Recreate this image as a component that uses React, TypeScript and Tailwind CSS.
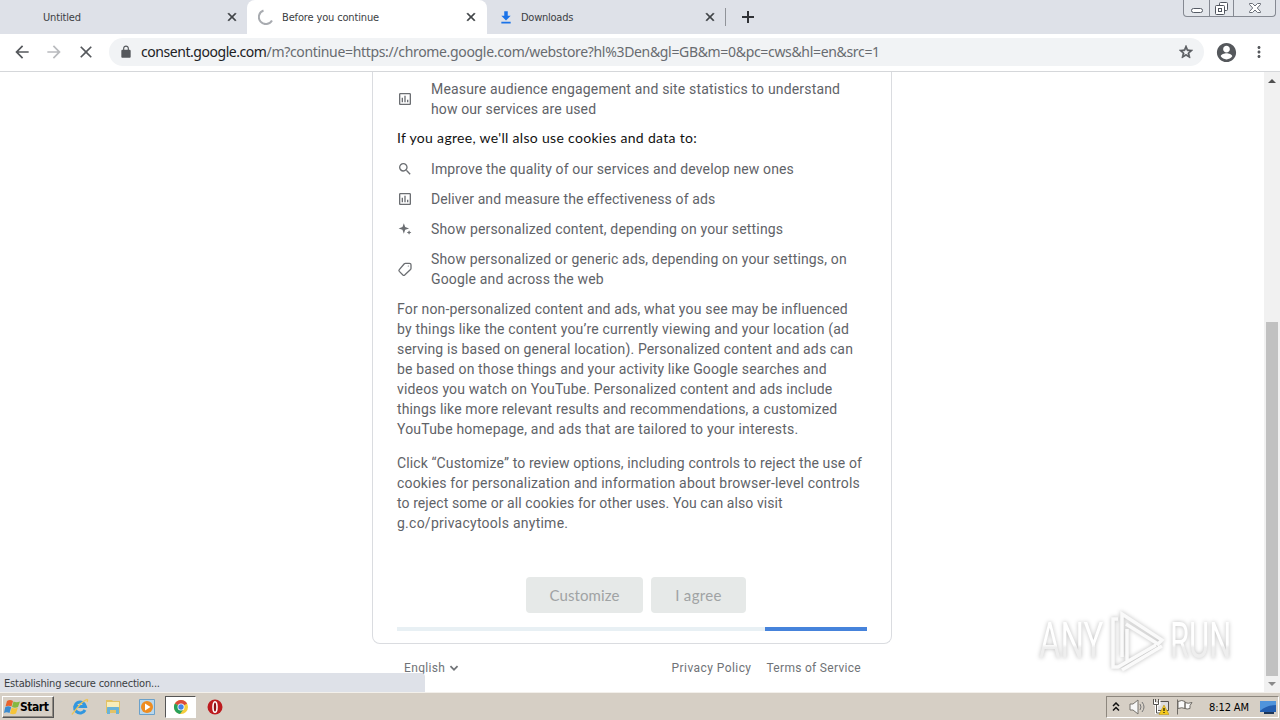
import type { ReactNode } from "react";

const ui = "font-['DejaVu_Sans_Condensed','DejaVu_Sans',sans-serif] [font-stretch:condensed]";

interface IconProps {
    d: string;
    className?: string;
}

function Icon({ d, className = "size-4" }: IconProps) {
    return (
        <svg viewBox="0 0 24 24" fill="currentColor" className={`shrink-0 ${className}`}>
            <path d={d} />
        </svg>
    );
}

const icons = {
    close: "M19 6.41 17.59 5 12 10.59 6.41 5 5 6.41 10.59 12 5 17.59 6.41 19 12 13.41 17.59 19 19 17.59 13.41 12z",
    back: "M20 11H7.83l5.59-5.59L12 4l-8 8 8 8 1.41-1.41L7.83 13H20v-2z",
    forward: "M12 4l-1.41 1.41L16.17 11H4v2h12.17l-5.58 5.59L12 20l8-8z",
    lock: "M18 8h-1V6c0-2.76-2.24-5-5-5S7 3.24 7 6v2H6c-1.1 0-2 .9-2 2v10c0 1.1.9 2 2 2h12c1.1 0 2-.9 2-2V10c0-1.1-.9-2-2-2zM9 8V6c0-1.66 1.34-3 3-3s3 1.34 3 3v2z",
    star: "M22 9.24l-7.19-.62L12 2 9.19 8.63 2 9.24l5.46 4.73L5.82 21 12 17.27 18.18 21l-1.63-7.03L22 9.24zM12 15.4l-3.76 2.27 1-4.28-3.32-2.88 4.38-.38L12 6.1l1.71 4.04 4.38.38-3.32 2.88 1 4.28L12 15.4z",
    account: "M12 2C6.48 2 2 6.48 2 12s4.48 10 10 10 10-4.48 10-10S17.52 2 12 2zm0 3c1.93 0 3.5 1.57 3.5 3.5S13.93 12 12 12s-3.5-1.57-3.5-3.5S10.07 5 12 5zm0 14.2c-2.5 0-4.71-1.28-6-3.22.03-1.99 4-3.08 6-3.08s5.97 1.09 6 3.08c-1.29 1.94-3.5 3.22-6 3.22z",
    dots: "M12 8c1.1 0 2-.9 2-2s-.9-2-2-2-2 .9-2 2 .9 2 2 2zm0 2c-1.1 0-2 .9-2 2s.9 2 2 2 2-.9 2-2-.9-2-2-2zm0 6c-1.1 0-2 .9-2 2s.9 2 2 2 2-.9 2-2-.9-2-2-2z",
    download: "M20 10h-5V2H9v8H4l8 8zM4 20v3h16v-3z",
    chart: "M19 3H5c-1.1 0-2 .9-2 2v14c0 1.1.9 2 2 2h14c1.1 0 2-.9 2-2V5c0-1.1-.9-2-2-2zm0 16H5V5h14v14zM7 10h2v7H7zm4-3h2v10h-2zm4 6h2v4h-2z",
    search: "M15.5 14h-.79l-.28-.27A6.47 6.47 0 0 0 16 9.5 6.5 6.5 0 1 0 9.5 16c1.61 0 3.09-.59 4.23-1.57l.27.28v.79l5 4.99L20.49 19l-4.99-5zm-6 0C7.01 14 5 11.99 5 9.5S7.01 5 9.5 5 14 7.01 14 9.5 11.99 14 9.5 14z",
    sparkle: "M10 2l2.3 6.7L19 11l-6.7 2.3L10 20l-2.3-6.7L1 11l6.7-2.3zM19 14l1.2 2.8L23 18l-2.8 1.2L19 22l-1.2-2.8L15 18l2.8-1.2z",
    chevron: "M5 6l7 7 7-7 3 3-10 10L2 9z",
};

function TagIcon() {
    return (
        <svg viewBox="0 0 16 16" className="size-4 shrink-0" fill="none" stroke="currentColor" strokeWidth="1.3">
            <path d="M8.4 2.3h4.1q1.5 0 1.5 1.5v3.5q0 .7-.5 1.2L7.7 14q-.9.8-1.8 0L2.3 10.4q-.8-.9 0-1.8L7.3 2.8q.5-.5 1.1-.5z" />
            <circle cx="11.3" cy="5" r=".6" fill="currentColor" stroke="none" />
        </svg>
    );
}

function TabStrip() {
    return (
        <div className={`flex h-[34px] bg-[#dee1e8] text-[11px] text-[#3c4043] ${ui}`}>
            <div className="flex w-[247px] items-center pr-2 pl-[43px]">
                <span className="flex-1 pt-0.5 tracking-[-0.15px]">Untitled</span>
                <Icon d={icons.close} className="size-3.5 stroke-current" />
            </div>
            <div className="flex w-[240px] items-center rounded-t-lg bg-white pr-[9px] pl-[11px]">
                <svg viewBox="0 0 16 16" className="mr-2 size-4" fill="none" stroke="#a8abb0" strokeWidth="2">
                    <path d="M5.5 1.5A7 7 0 1 0 14 11.5" />
                </svg>
                <span className="flex-1 pt-0.5 tracking-[-0.15px]">Before you continue</span>
                <Icon d={icons.close} className="size-3.5 stroke-current" />
            </div>
            <div className="flex w-[239px] items-center pr-[9px] pl-3">
                <Icon d={icons.download} className="mr-2 size-3.5 text-[#1a73e8]" />
                <span className="flex-1 pt-0.5 tracking-[-0.25px]">Downloads</span>
                <Icon d={icons.close} className="size-3.5 stroke-current" />
            </div>
            <div className="-ml-px my-2 w-px bg-[#909399]" />
            <svg viewBox="0 0 12 12" className="mt-[11px] ml-4 size-3" stroke="#303236" strokeWidth="2">
                <path d="M6 0v12M0 6h12" />
            </svg>
            <div className="mr-1 ml-auto flex h-[17px] w-[93px] rounded-b border border-t-0 border-[#858992] bg-[#e3e6eb]">
                <div className="flex w-[25px] items-end justify-center pb-[3px]">
                    <div className="h-[5px] w-3 rounded-sm border border-[#555b65] bg-white" />
                </div>
                <div className="flex w-[25px] justify-center border-x border-[#858992] pt-[2px]">
                    <svg viewBox="0 0 13 13" className="size-[13px]" fill="#fff" stroke="#50555e">
                        <rect x="4.5" y=".5" width="8" height="8" rx="1" />
                        <rect x=".5" y="3.5" width="9" height="9" rx="1" />
                        <rect x="3.5" y="6.5" width="3" height="3" />
                    </svg>
                </div>
                <div className="flex flex-1 justify-center pt-[3px]">
                    <svg viewBox="0 0 12 10" className="h-2.5 w-3" fill="#fff" stroke="#6a6f78">
                        <path d="M.5.5h3L6 3 8.5.5h3v1L8.3 5l3.2 3.5v1h-3L6 7 3.5 9.5h-3v-1L3.7 5 .5 1.5z" />
                    </svg>
                </div>
            </div>
        </div>
    );
}

function Toolbar() {
    return (
        <div className="flex h-[38px] items-center border-b border-[#d5d7da] bg-white pr-3 pb-px pl-3 text-[#55585c]">
            <Icon d={icons.back} className="size-5" />
            <Icon d={icons.forward} className="ml-3 size-5 text-[#b9bbbe]" />
            <Icon d={icons.close} className="ml-3 size-5" />
            <div className="ml-[13px] flex h-7 w-[1095px] items-center rounded-full bg-[#f1f3f5] pr-[9px] pl-2.5">
                <Icon d={icons.lock} className="size-3.5" />
                <span className="ml-2 flex-1 pb-0.5 font-['Noto_Sans',sans-serif] text-[14px] whitespace-nowrap text-[#686b70]">
                    <span className="tracking-[-0.45px] text-[#202124]">consent.google.com</span>
                    <span className="tracking-[-0.33px]">/m?continue=https://chrome.google.com/webstore?hl%3Den&amp;gl=GB&amp;m=0&amp;pc=cws&amp;hl=en&amp;src=1</span>
                </span>
                <Icon d={icons.star} className="mr-px size-4 stroke-current" />
            </div>
            <Icon d={icons.account} className="ml-[11px] size-[23px]" />
            <Icon d={icons.dots} className="ml-3 size-[18px]" />
        </div>
    );
}

interface ItemProps {
    icon: ReactNode;
    children: ReactNode;
}

function Item({ icon, children }: ItemProps) {
    return (
        <li className="flex items-center">
            <span className="mr-[18px] flex w-4 justify-center text-[#6b6e72]">{icon}</span>
            <div>{children}</div>
        </li>
    );
}

function ConsentCard() {
    return (
        <div className="w-[520px] rounded-b-lg border border-t-0 border-[#dadce0] px-6 pt-[7px] pb-3 text-sm leading-5 whitespace-nowrap text-[#5f6368]">
            <ul className="space-y-2.5">
                <Item icon={<Icon d={icons.chart} />}>
                    <p className="tracking-[0.165px]">Measure audience engagement and site statistics to understand</p>
                    <p className="tracking-[0.12px]">how our services are used</p>
                </Item>
                <li className="-mt-px mb-[11px] font-[Lato,sans-serif] text-[14px] tracking-[0.31px] text-[#111]">If you agree, we'll also use cookies and data to:</li>
                <Item icon={<Icon d={icons.search} />}>
                    <p className="tracking-[0.13px]">Improve the quality of our services and develop new ones</p>
                </Item>
                <Item icon={<Icon d={icons.chart} />}>
                    <p className="tracking-[0.11px]">Deliver and measure the effectiveness of ads</p>
                </Item>
                <Item icon={<Icon d={icons.sparkle} className="size-3.5" />}>
                    <p className="tracking-[0.175px]">Show personalized content, depending on your settings</p>
                </Item>
                <Item icon={<TagIcon />}>
                    <p className="tracking-[0.155px]">Show personalized or generic ads, depending on your settings, on</p>
                    <p className="tracking-[0.16px]">Google and across the web</p>
                </Item>
            </ul>
            <div className="mt-2.5">
                <p className="tracking-[0.17px]">For non-personalized content and ads, what you see may be influenced</p>
                <p className="tracking-[0.19px]">by things like the content you’re currently viewing and your location (ad</p>
                <p className="tracking-[0.15px]">serving is based on general location). Personalized content and ads can</p>
                <p className="tracking-[0.14px]">be based on those things and your activity like Google searches and</p>
                <p className="tracking-[0.17px]">videos you watch on YouTube. Personalized content and ads include</p>
                <p className="tracking-[0.14px]">things like more relevant results and recommendations, a customized</p>
                <p className="tracking-[0.2px]">YouTube homepage, and ads that are tailored to your interests.</p>
            </div>
            <div className="mt-3.5">
                <p className="tracking-[0.115px]">Click “Customize” to review options, including controls to reject the use of</p>
                <p className="tracking-[0.17px]">cookies for personalization and information about browser-level controls</p>
                <p className="tracking-[0.08px]">to reject some or all cookies for other uses. You can also visit</p>
                <p className="tracking-[0.25px]">g.co/privacytools anytime.</p>
            </div>
            <div className="mt-11 flex gap-2 pl-[129px] font-[Lato,sans-serif] text-[15px] tracking-[0.1px] text-[#a0a3a4]">
                <button className="h-9 w-[117px] rounded-sm bg-[#e6e9e8]">Customize</button>
                <button className="h-9 w-[95px] rounded-sm bg-[#e6e9e8] tracking-[0.35px]">I agree</button>
            </div>
            <div className="mt-3.5 flex h-1 justify-end bg-[#e8f0f4]">
                <div className="w-[102px] bg-[#4683db]" />
            </div>
        </div>
    );
}

function Watermark() {
    return (
        <div className="absolute top-[536px] left-[1039px] flex items-center font-[Roboto,sans-serif] text-[50px] leading-[66px] text-transparent [filter:drop-shadow(0_0_2px_#bbb)]">
            <div className="w-[64px]">
                <span className="block w-max origin-left scale-x-[0.66] bg-linear-to-b from-white from-55% to-[#eee] to-60% bg-clip-text">ANY</span>
            </div>
            <svg viewBox="0 0 58 64" className="ml-[5px] h-16 w-[58px] shrink-0" fill="none" stroke="#fafafa" strokeWidth="3.5">
                <path d="M14 48V5l40 26-4 4-32-20M10 10H5v48h5l38-22M19 20v33M14 61l40-24" />
            </svg>
            <div className="ml-1 w-[66px]">
                <span className="block w-max origin-left scale-x-[0.62] bg-linear-to-b from-white from-55% to-[#eee] to-60% bg-clip-text">RUN</span>
            </div>
        </div>
    );
}

function Scrollbar() {
    return (
        <div className="flex w-4 flex-col items-center bg-[#f1f1f1]">
            <div className="mt-[7px] size-0 border-x-4 border-b-4 border-x-transparent border-b-[#505050]" />
            <div className="mt-[239px] h-[354px] w-3 bg-[#c1c1c1]" />
            <div className="mt-1.5 size-0 border-x-4 border-t-4 border-x-transparent border-t-[#8a8a8a]" />
        </div>
    );
}

function StartFlag() {
    return (
        <svg viewBox="0 0 16 16" className="size-4 shrink-0">
            <path d="M3 2q3-2 6 0L7.5 7.5q-3-1.7-6 0z" fill="#e9632d" />
            <path d="M9.5 2.4q3 1.5 6.5 0L14 8q-3 1.5-6 0z" fill="#85b840" />
            <path d="M1.2 8.2q3-1.7 6 0L5.5 14q-3-1.7-5.5 0z" fill="#3b8bd0" />
            <path d="M7.7 8.7q3 1.5 6.1 0L12 14.5q-3 1.5-6 0z" fill="#f6c438" />
        </svg>
    );
}

function ChromeLogo() {
    return (
        <svg viewBox="0 0 16 16" className="size-4">
            <circle cx="8" cy="8" r="7" fill="#f5cd3d" />
            <path d="M8 8 1.9 4.5A7 7 0 0 1 14.1 4.5z" fill="#db4b3b" />
            <path d="M8 8 1.9 4.5A7 7 0 0 0 7 15l3-4z" fill="#27a05b" />
            <circle cx="8" cy="8" r="3.5" fill="#fff" />
            <circle cx="8" cy="8" r="2.7" fill="#4684e8" />
        </svg>
    );
}

function Taskbar() {
    return (
        <div className={`flex h-7 items-center border-t border-[#f3f0eb] bg-[#d6cfc5] pt-px text-[11px] text-black ${ui}`}>
            <div className="ml-[2px] flex h-[22px] w-[52px] items-center border border-t-white border-r-[#555] border-b-[#555] border-l-white pl-px shadow-[inset_-1px_-1px_#918b83]">
                <StartFlag />
                <span className="text-[12px] font-bold tracking-[-0.45px]">Start</span>
            </div>
            <svg viewBox="0 0 18 18" className="ml-[17px] size-[18px]" fill="none">
                <path d="M14 12A5.5 5.5 0 1 1 14.5 8.5H5" stroke="#3297df" strokeWidth="3" />
                <path d="M2 15C-1 19 5 11 10 5.5 15 1 18 0 16 4" stroke="#ecc45a" strokeWidth="1.3" />
            </svg>
            <svg viewBox="0 0 16 16" className="ml-4 size-4">
                <path d="M1 1h6l1 1h7v12H1z" fill="#e3c265" />
                <path d="M2 3h12v5H2z" fill="#f8edb9" />
                <path d="M2 15V9q0-1 1-1h10q1 0 1 1v6h-3v-4H5v4z" fill="#69b3d8" />
            </svg>
            <svg viewBox="0 0 16 16" className="ml-[18px] size-4">
                <path d="M.5.5h15v15H.5z" fill="#b9d7ec" stroke="#6ba1ca" />
                <circle cx="8" cy="8" r="6" fill="#ee8c20" />
                <path d="M6 4.5 11.5 8 6 11.5z" fill="#fff" />
            </svg>
            <div className="ml-2.5 flex h-[22px] w-[31px] items-center justify-center border border-t-[#555] border-r-white border-b-white border-l-[#555] bg-white">
                <ChromeLogo />
            </div>
            <svg viewBox="0 0 16 16" className="ml-[11px] size-4">
                <circle cx="8" cy="8" r="7.5" fill="#bd1b1f" />
                <ellipse cx="8" cy="8" rx="2" ry="5.3" fill="#8e1015" stroke="#fff" strokeWidth="1.6" />
            </svg>
            <div className="mr-px ml-auto flex h-[22px] w-[173px] items-center border border-t-[#8d877e] border-r-white border-b-white border-l-[#8d877e] pl-[5px]">
                <svg viewBox="0 0 8 10" className="h-2.5 w-2" fill="none" stroke="#111" strokeWidth="1.5">
                    <path d="m1 4 3-3 3 3M1 8.5l3-3 3 3" />
                </svg>
                <svg viewBox="0 0 18 16" className="ml-[9px] h-4 w-[18px]" fill="none" stroke="#77736d">
                    <path d="M1 5h3l5-4v14l-5-4H1z" fill="#f7f7f7" />
                    <path d="M11 5q2 3 0 6M13 3q4 5 0 10" stroke="#777" />
                </svg>
                <svg viewBox="0 0 16 16" className="ml-[6px] size-4">
                    <path d="M4.5 2.5h11v9h-11z" fill="#ddd" stroke="#55534f" />
                    <path d="M1 1v4h5V1M3.5 5v8.5H9" fill="none" stroke="#fff" strokeWidth="3" />
                    <path d="M.5 0v5.5h5V0M2.5 0v3m1 3v8H8" fill="none" stroke="#55534f" />
                    <path d="m11 6 5 9.5H6z" fill="#f4c91c" stroke="#b28c0a" strokeWidth=".5" />
                    <path d="M11 9v3m0 1v1" stroke="#111" strokeWidth="1.2" />
                </svg>
                <svg viewBox="0 0 17 16" className="ml-[7px] h-4 w-[17px]" fill="#fafafa" stroke="#6f6b65">
                    <path d="M1.5.5v15M2 2.5q4-2 7 0v7q-3-1.5-7 0zM9 3.5q3 1.5 7 0l-2 3v3q-3 1-5 0z" />
                </svg>
                <span className="ml-4 w-[43px] pt-0.5 tracking-[-0.1px] whitespace-nowrap">8:12 AM</span>
                <svg viewBox="0 0 16 14" className="ml-[8px] h-3.5 w-4">
                    <path d="M0 1h16v11H0z" fill="#235eaf" />
                    <path d="M0 1h16v4Q7 5 0 11z" fill="#4f94dc" />
                    <path d="M4 13h10" stroke="#1d3658" strokeWidth="2" />
                </svg>
            </div>
        </div>
    );
}

export default function App() {
    return (
        <div className="flex h-[720px] w-[1280px] flex-col overflow-hidden bg-white font-[Roboto,sans-serif]">
            <TabStrip />
            <Toolbar />
            <div className="relative flex h-[620px]">
                <main className="flex-1 pl-[372px]">
                    <ConsentCard />
                    <footer className="flex w-[520px] items-center pt-3.5 pr-[31px] pl-8 text-xs leading-5 tracking-[0.35px] whitespace-nowrap text-[#707377]">
                        <span>English</span>
                        <Icon d={icons.chevron} className="ml-1 size-2.5" />
                        <span className="ml-auto tracking-[0.43px]">Privacy Policy</span>
                        <span className="ml-[15px] tracking-[0.3px]">Terms of Service</span>
                    </footer>
                </main>
                <Scrollbar />
                <Watermark />
                <div className={`absolute bottom-0 left-0 h-[19px] w-[425px] rounded-tr bg-[#dee1e8] pt-px pl-1 text-[11px] leading-[19px] tracking-[-0.22px] text-[#3c4043] ${ui}`}>
                    Establishing secure connection...
                </div>
            </div>
            <Taskbar />
        </div>
    );
}
